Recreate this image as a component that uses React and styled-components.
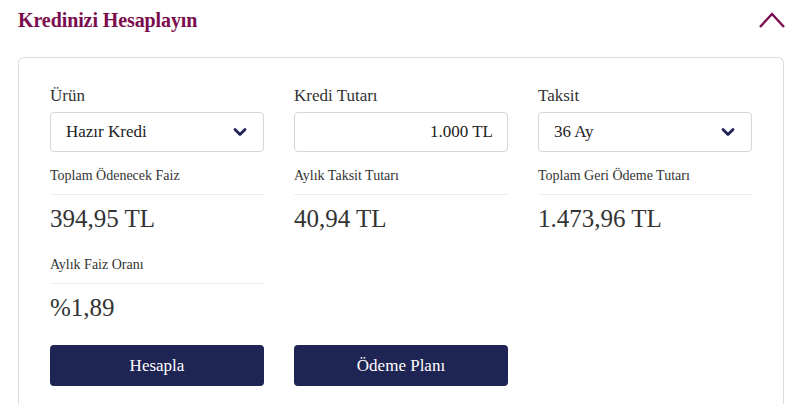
import React from 'react'
import styled, { createGlobalStyle } from 'styled-components'

const GlobalStyle = createGlobalStyle`
  html, body {
    margin: 0;
    padding: 0;
    background: #fff;
    font-family: 'Liberation Serif', 'DejaVu Serif', serif;
    color: #333;
  }
`

const Page = styled.div`
  padding: 0 18px;
`

const Header = styled.div`
  display: flex;
  align-items: center;
  justify-content: space-between;
  height: 40px;
`

const Title = styled.h2`
  margin: 0;
  font-size: 20px;
  font-weight: 700;
  color: #7b0d4e;
  letter-spacing: -0.1px;
`

const Toggle = styled.div`
  width: 28px;
  height: 20px;
  display: flex;
  align-items: center;
  justify-content: center;
  margin-right: -2px;
`

const Card = styled.div`
  margin-top: 17px;
  border: 1px solid #dcdcdc;
  border-bottom: none;
  border-radius: 6px 6px 0 0;
  padding: 28px 31px 18px 31px;
`

const Grid = styled.div`
  display: grid;
  grid-template-columns: repeat(3, 1fr);
  column-gap: 30px;
`

const Column = styled.div`
  display: flex;
  flex-direction: column;
`

const FieldLabel = styled.div`
  font-size: 17px;
  line-height: 20px;
  color: #333;
  margin-bottom: 6px;
`

const Box = styled.div`
  height: 40px;
  box-sizing: border-box;
  border: 1px solid #d6d6d6;
  border-radius: 4px;
  display: flex;
  align-items: center;
  justify-content: ${p => (p.$right ? 'flex-end' : 'space-between')};
  padding: ${p => (p.$right ? '0 14px' : '0 16px 0 15px')};
  font-size: 17px;
  color: #222;
`

const Stat = styled.div`
  margin-top: ${p => (p.$first ? '16px' : '24px')};
`

const StatLabel = styled.div`
  font-size: 14px;
  line-height: 16px;
  color: #333;
  padding-bottom: 10px;
  border-bottom: 1px solid #eeeeee;
`

const StatValue = styled.div`
  margin-top: 10px;
  font-size: 25px;
  line-height: 28px;
  color: #333;
`

const Actions = styled.div`
  display: grid;
  grid-template-columns: repeat(3, 1fr);
  column-gap: 30px;
  margin-top: 23px;
`

const Button = styled.button`
  height: 41px;
  border: none;
  border-radius: 4px;
  background: #1e2454;
  color: #fff;
  font-family: inherit;
  font-size: 17px;
  cursor: pointer;
  padding: 0;
`

const Chevron = () => (
  <svg width="14" height="10" viewBox="0 0 14 10">
    <path d="M2 2.5 L7 7.5 L12 2.5" fill="none" stroke="#1e2454" strokeWidth="2.8" strokeLinecap="round" strokeLinejoin="round" />
  </svg>
)

const ChevronUp = () => (
  <svg width="28" height="18" viewBox="0 0 28 18">
    <path d="M2 16 L14 3 L26 16" fill="none" stroke="#7b0d4e" strokeWidth="2.4" />
  </svg>
)

export default function App() {
  return (
    <>
      <GlobalStyle />
      <Page>
        <Header>
          <Title>Kredinizi Hesaplayın</Title>
          <Toggle><ChevronUp /></Toggle>
        </Header>
        <Card>
          <Grid>
            <Column>
              <FieldLabel>Ürün</FieldLabel>
              <Box>Hazır Kredi <Chevron /></Box>
              <Stat $first>
                <StatLabel>Toplam Ödenecek Faiz</StatLabel>
                <StatValue>394,95 TL</StatValue>
              </Stat>
              <Stat>
                <StatLabel>Aylık Faiz Oranı</StatLabel>
                <StatValue>%1,89</StatValue>
              </Stat>
            </Column>
            <Column>
              <FieldLabel>Kredi Tutarı</FieldLabel>
              <Box $right>1.000 TL</Box>
              <Stat $first>
                <StatLabel>Aylık Taksit Tutarı</StatLabel>
                <StatValue>40,94 TL</StatValue>
              </Stat>
            </Column>
            <Column>
              <FieldLabel>Taksit</FieldLabel>
              <Box>36 Ay <Chevron /></Box>
              <Stat $first>
                <StatLabel>Toplam Geri Ödeme Tutarı</StatLabel>
                <StatValue>1.473,96 TL</StatValue>
              </Stat>
            </Column>
          </Grid>
          <Actions>
            <Button>Hesapla</Button>
            <Button>Ödeme Planı</Button>
          </Actions>
        </Card>
      </Page>
    </>
  )
}
